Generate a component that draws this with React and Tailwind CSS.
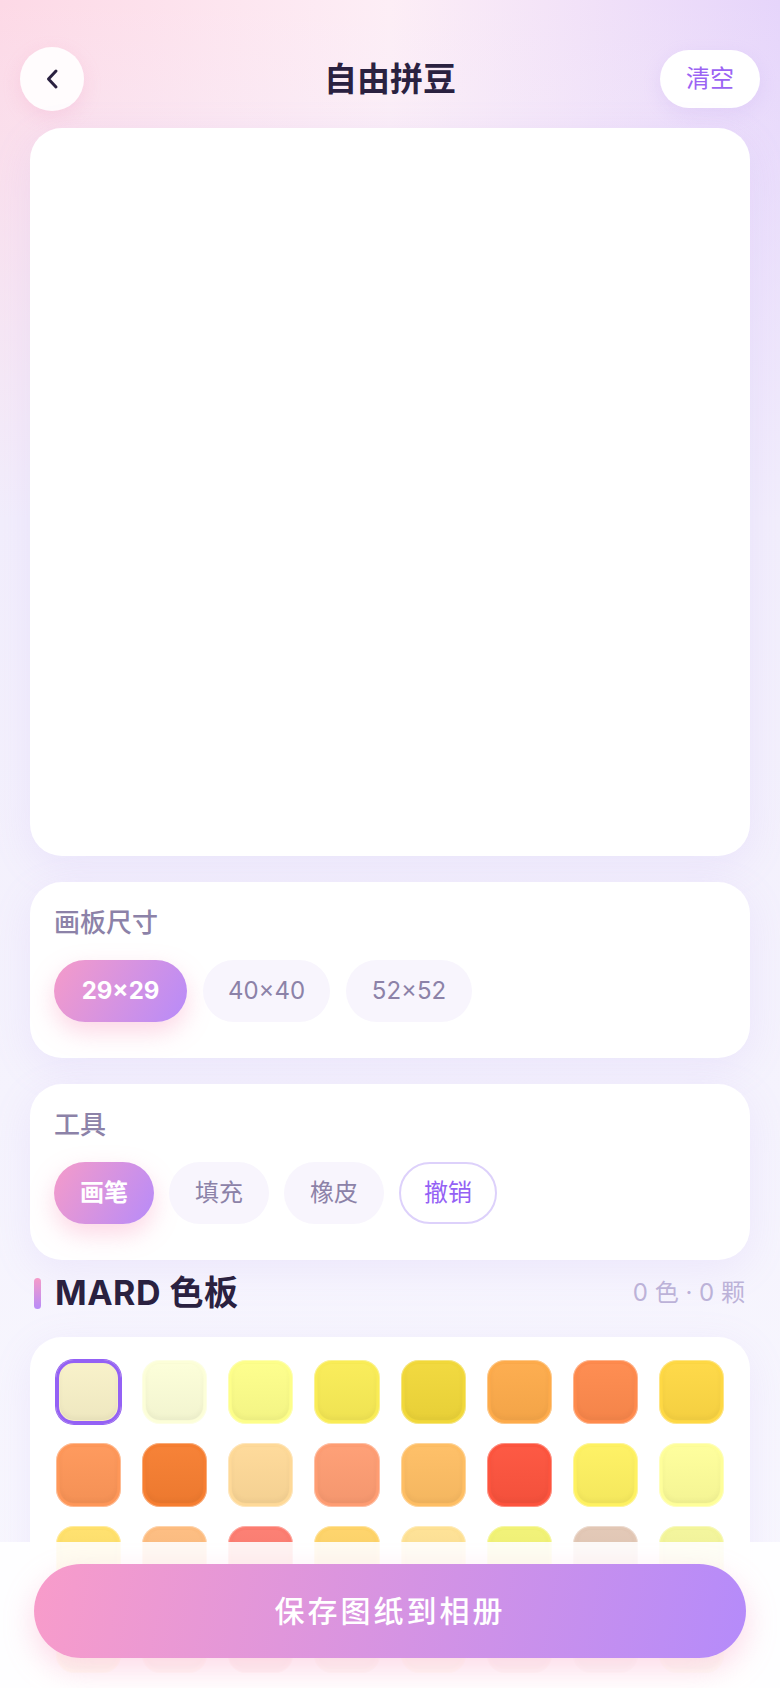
import React from 'react';

const rows = [
  ['bg-[#f8f1c8]', 'bg-[#fcfed8]', 'bg-[#fdfe8a]', 'bg-[#f9ec56]', 'bg-[#f1d83a]', 'bg-[#fdab4b]', 'bg-[#fe8a4d]', 'bg-[#fed844]'],
  ['bg-[#fe9759]', 'bg-[#f67e31]', 'bg-[#fed998]', 'bg-[#fe9d73]', 'bg-[#febe64]', 'bg-[#fd543e]', 'bg-[#fef161]', 'bg-[#fefe9a]'],
  ['bg-[#ffe06b]', 'bg-[#fdbc7f]', 'bg-[#fc7c70]', 'bg-[#fed368]', 'bg-[#fee194]', 'bg-[#f1f275]', 'bg-[#e2c7b5]', 'bg-[#f3f59a]'],
  ['bg-[#fde58a]', 'bg-[#fcc6a6]', 'bg-[#f9a9a0]', 'bg-[#f5d0b0]', 'bg-[#fde0a8]', 'bg-[#f7c6b6]', 'bg-[#efd8cc]', 'bg-[#f4f0b0]'],
];

function Swatch({ cls, selected }) {
  return (
    <div
      className={`h-[64px] rounded-[18px] p-[4px] ${cls} ${
        selected
          ? 'shadow-[0_0_0_1px_#9461f5,inset_0_0_0_3px_#9461f5]'
          : 'shadow-[inset_0_0_0_1px_rgba(255,255,255,0.35)]'
      }`}
    >
      <div className="h-full w-full rounded-[14px] bg-[linear-gradient(180deg,rgba(255,255,255,0.03),rgba(0,0,0,0.04))] shadow-[inset_0_-3px_5px_rgba(0,0,0,0.035),0_0_0_1px_rgba(0,0,0,0.012)]" />
    </div>
  );
}

export default function App() {
  return (
    <div className="relative h-[1688px] w-full overflow-hidden font-['Inter','Noto_Sans_CJK_SC',sans-serif] bg-[linear-gradient(180deg,rgba(242,238,252,0)_0px,#f2eefc_520px,#f5f3fd_1100px,#f8f7fe_1600px),linear-gradient(90deg,#fdd9e6,#fdeef6_50%,#e6d5fb)]">
      {/* header */}
      <div className="flex items-center px-5 pt-[47px]">
        <div className="flex flex-1">
          <button className="flex h-16 w-16 items-center justify-center rounded-full bg-white/90 shadow-[0_6px_18px_rgba(240,150,190,0.22)]">
            <svg width="14" height="22" viewBox="0 0 14 22" fill="none">
              <polyline points="11,3 3.5,11 11,19" stroke="#2a2140" strokeWidth="3" strokeLinecap="round" strokeLinejoin="round" />
            </svg>
          </button>
        </div>
        <h1 className="text-[33px] font-bold leading-none text-[#2a2140]">自由拼豆</h1>
        <div className="flex flex-1 justify-end">
          <button className="h-[58px] w-[100px] rounded-full bg-white text-[24px] text-[#9b63f3] shadow-[0_6px_18px_rgba(190,160,240,0.2)]">
            清空
          </button>
        </div>
      </div>

      <div className="mt-[17px] flex flex-col gap-[26px] px-[30px]">
        {/* canvas */}
        <div className="h-[728px] rounded-[32px] bg-white shadow-[0_10px_40px_rgba(170,140,240,0.12)]" />

        {/* board size */}
        <div className="rounded-[32px] bg-white px-6 pb-[36px] pt-[23px] shadow-[0_10px_40px_rgba(170,140,240,0.12)]">
          <div className="mb-[19px] text-[26px] font-medium leading-[36px] text-[#8c82a8]">画板尺寸</div>
          <div className="flex gap-4">
            <button className="h-[62px] w-[133px] rounded-full bg-[linear-gradient(120deg,#f59bc9,#b78bf9)] text-[24px] font-bold text-white shadow-[0_10px_24px_rgba(250,140,180,0.35)]">
              29×29
            </button>
            <button className="h-[62px] w-[127px] rounded-full bg-[#f8f5fd] text-[24px] text-[#8c82a8]">40×40</button>
            <button className="h-[62px] w-[126px] rounded-full bg-[#f8f5fd] text-[24px] text-[#8c82a8]">52×52</button>
          </div>
        </div>

        {/* tools */}
        <div className="rounded-[32px] bg-white px-6 pb-[36px] pt-[23px] shadow-[0_10px_40px_rgba(170,140,240,0.12)]">
          <div className="mb-[19px] text-[26px] font-medium leading-[36px] text-[#8c82a8]">工具</div>
          <div className="flex gap-[15px]">
            <button className="h-[62px] w-[100px] rounded-full bg-[linear-gradient(120deg,#f59bc9,#b78bf9)] text-[24px] font-bold text-white shadow-[0_10px_24px_rgba(250,140,180,0.35)]">
              画笔
            </button>
            <button className="h-[62px] w-[100px] rounded-full bg-[#f8f5fd] text-[24px] text-[#8c82a8]">填充</button>
            <button className="h-[62px] w-[100px] rounded-full bg-[#f8f5fd] text-[24px] text-[#8c82a8]">橡皮</button>
            <button className="h-[62px] w-[98px] rounded-full border-2 border-[#ddd1fb] bg-white text-[24px] text-[#9461f5]">撤销</button>
          </div>
        </div>
      </div>

      {/* section header */}
      <div className="mt-[13px] flex h-[40px] items-center justify-between pl-[34px] pr-[35px]">
        <div className="flex items-center gap-[14px]">
          <div className="h-[31px] w-[7px] rounded-full bg-[linear-gradient(180deg,#f59bc8,#b88bf8)]" />
          <span className="text-[34px] font-bold leading-none tracking-[0.5px] text-[#2a2140]">MARD 色板</span>
        </div>
        <span className="text-[24px] text-[#bcb2d8]">0 色 · 0 颗</span>
      </div>

      {/* palette */}
      <div className="mx-[30px] mt-[24px] rounded-[32px] bg-white px-[26px] pb-[40px] pt-[23px] shadow-[0_10px_40px_rgba(170,140,240,0.12)]">
        <div className="grid grid-cols-8 gap-x-[21px] gap-y-[19px]">
          {rows.flatMap((row, r) =>
            row.map((cls, c) => <Swatch key={`${r}-${c}`} cls={cls} selected={r === 0 && c === 0} />)
          )}
        </div>
      </div>

      {/* bottom bar */}
      <div className="absolute bottom-0 left-0 right-0 h-[146px] bg-white/90 px-[34px] pt-[22px]">
        <button className="h-[94px] w-full rounded-full bg-[linear-gradient(100deg,#f89cca,#b58bfa)] text-[30px] font-medium tracking-[3px] text-white shadow-[0_12px_30px_rgba(248,150,190,0.35)]">
          保存图纸到相册
        </button>
      </div>
    </div>
  );
}
